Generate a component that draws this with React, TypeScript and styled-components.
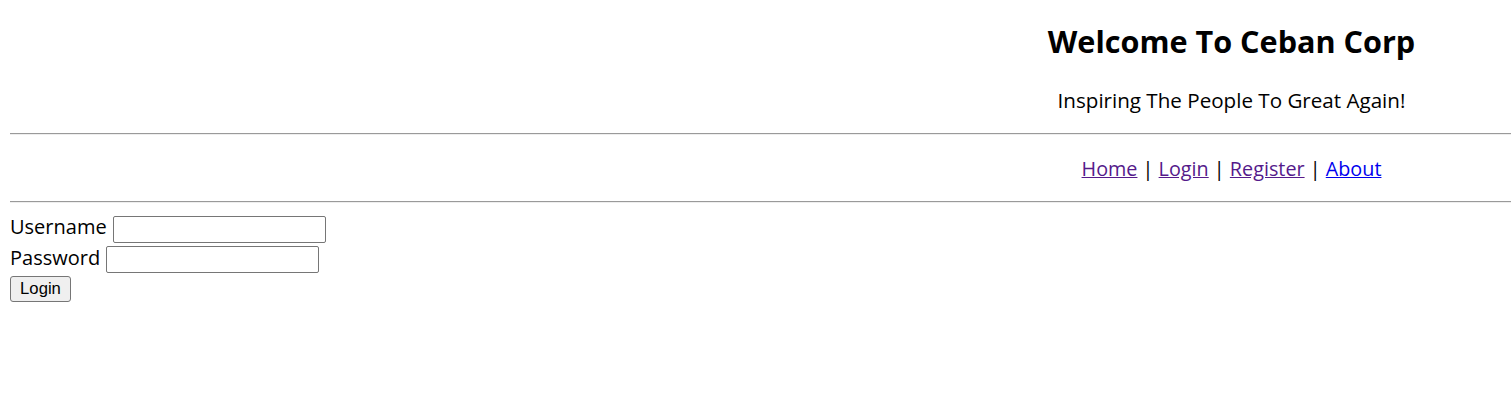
import React from "react";
import styled, { createGlobalStyle } from "styled-components";

const GlobalStyle = createGlobalStyle`
  html, body {
    margin: 0;
    padding: 0;
    background: #ffffff;
    overflow: hidden;
  }
  body {
    font-family: "Open Sans", "Noto Sans", sans-serif;
    color: #000000;
  }
`;

const Page = styled.div`
  padding-left: 10px;
  width: 1501px;
`;

const Header = styled.header`
  display: flex;
  justify-content: flex-end;
  padding-top: 21px;
`;

const Banner = styled.div`
  width: 559px;
  text-align: center;
`;

const Title = styled.h2`
  margin: 0;
  font-size: 30.6px;
  line-height: 40px;
  font-weight: 700;
`;

const Tagline = styled.p`
  margin: 26px 0 0;
  font-size: 20.6px;
  line-height: 26px;
`;

const Rule = styled.hr<{ $top: number }>`
  margin: ${(p) => p.$top}px 0 0;
  height: 0;
  border: 0;
  border-top: 1px solid #9a9a9a;
  border-bottom: 1px solid #eeeeee;
`;

const NavBar = styled.nav`
  display: flex;
  justify-content: flex-end;
  margin-top: 21px;
`;

const NavLinks = styled.div`
  width: 559px;
  text-align: center;
  font-size: 19.8px;
  line-height: 26px;
`;

const NavLink = styled.a<{ $visited?: boolean }>`
  color: ${(p) => (p.$visited ? "#551a8b" : "#0000ee")};
  text-decoration: underline;
  cursor: pointer;
`;

const LoginForm = styled.form`
  margin-top: 11px;
`;

const Row = styled.div`
  display: flex;
  align-items: baseline;
  gap: 6px;

  & + & {
    margin-top: 2px;
  }
`;

const Label = styled.label`
  font-size: 20px;
  line-height: 26px;
`;

const TextInput = styled.input`
  box-sizing: border-box;
  width: 213px;
  height: 27px;
  padding: 1px 3px;
  border: 1px solid #767676;
  border-radius: 2px;
  font-family: "Liberation Sans", Arial, sans-serif;
  font-size: 16.67px;
  background: #ffffff;
`;

const SubmitButton = styled.button`
  box-sizing: border-box;
  margin-top: 3px;
  width: 61px;
  height: 26px;
  padding: 0;
  border: 1px solid #767676;
  border-radius: 3px;
  background: #efefef;
  font-family: "Liberation Sans", Arial, sans-serif;
  font-size: 16.67px;
  color: #000000;
`;

const links = [
  { label: "Home", visited: true },
  { label: "Login", visited: true },
  { label: "Register", visited: true },
  { label: "About", visited: false },
];

export default function App() {
  return (
    <>
      <GlobalStyle />
      <Page>
        <Header>
          <Banner>
            <Title>Welcome To Ceban Corp</Title>
            <Tagline>Inspiring The People To Great Again!</Tagline>
          </Banner>
        </Header>
        <Rule $top={20} />
        <NavBar>
          <NavLinks>
            {links.map((l, i) => (
              <React.Fragment key={l.label}>
                {i > 0 && " | "}
                <NavLink $visited={l.visited}>{l.label}</NavLink>
              </React.Fragment>
            ))}
          </NavLinks>
        </NavBar>
        <Rule $top={19} />
        <LoginForm onSubmit={(e) => e.preventDefault()}>
          <Row>
            <Label htmlFor="username">Username</Label>
            <TextInput id="username" type="text" />
          </Row>
          <Row>
            <Label htmlFor="password">Password</Label>
            <TextInput id="password" type="password" />
          </Row>
          <SubmitButton type="submit">Login</SubmitButton>
        </LoginForm>
      </Page>
    </>
  );
}
